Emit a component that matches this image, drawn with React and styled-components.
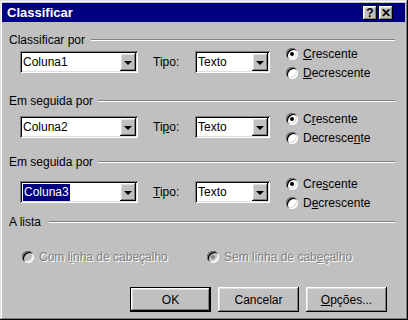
import React from 'react';
import styled, { createGlobalStyle } from 'styled-components';

const GlobalStyle = createGlobalStyle`
  html, body { margin: 0; padding: 0; background: #c0c0c0; }
  body { font-family: "Liberation Sans", Arial, sans-serif; font-size: 12px; color: #000; }
`;

const raised = `
  box-shadow: inset -1px -1px #000, inset 1px 1px #fff, inset -2px -2px #808080, inset 2px 2px #dfdfdf;
`;
const sunken = `
  box-shadow: inset 1px 1px #808080, inset -1px -1px #fff, inset 2px 2px #000, inset -2px -2px #dfdfdf;
`;

const Window = styled.div`
  box-sizing: border-box;
  width: 408px;
  height: 320px;
  padding: 3px 3px 3px 2px;
  background: #c0c0c0;
  box-shadow: inset -1px -1px #000, inset 1px 1px #dfdfdf, inset -2px -2px #808080, inset 2px 2px #fff;
  display: flex;
  flex-direction: column;
`;

const TitleBar = styled.div`
  height: 19px;
  background: #000080;
  display: flex;
  align-items: center;
  padding: 0 12px 0 5px;
  color: #fff;
`;

const Title = styled.span`
  flex: 1;
  font-weight: bold;
  font-size: 13px;
`;

const TitleButton = styled.div`
  box-sizing: border-box;
  width: 14px;
  height: 14px;
  margin-left: ${p => p.$gap || 0}px;
  background: #c0c0c0;
  ${raised}
  color: #000;
  font: bold 12px "Liberation Sans", Arial, sans-serif;
  display: flex;
  align-items: center;
  justify-content: center;
  line-height: 1;
`;

const Header = styled.div`
  display: flex;
  align-items: center;
  height: 14px;
  margin-top: ${p => p.$top}px;
  padding: 0 10px 0 7px;
`;

const HeaderLine = styled.div`
  flex: 1;
  margin-left: ${p => p.$gap || 6}px;
  border-top: 1px solid #808080;
  border-bottom: 1px solid #fff;
`;

const Row = styled.div`
  display: flex;
  align-items: center;
  height: 22px;
  margin-top: ${p => p.$top}px;
  padding-left: 18px;
`;

const Combo = styled.div`
  box-sizing: border-box;
  width: ${p => p.$width}px;
  height: 22px;
  padding: 2px;
  background: #fff;
  ${sunken}
  display: flex;
  align-items: center;
`;

const ComboText = styled.div`
  flex: 1;
  padding-left: 1px;
  white-space: nowrap;
`;

const Selected = styled.span`
  background: #000080;
  color: #fff;
  padding: 1px 1px 2px 1px;
`;

const DropButton = styled.div`
  box-sizing: border-box;
  width: 16px;
  height: 18px;
  background: #c0c0c0;
  ${raised}
  display: flex;
  align-items: center;
  justify-content: center;

  &::after {
    content: '';
    border-left: 4px solid transparent;
    border-right: 4px solid transparent;
    border-top: 4px solid #000;
    margin-top: 1px;
  }
`;

const Label = styled.div`
  width: 42px;
  margin-left: 15px;
`;

const Key = styled.span`
  text-decoration: underline;
  text-underline-offset: 1px;
`;

const RadioGroup = styled.div`
  display: flex;
  flex-direction: column;
  margin-left: 16px;
  margin-top: 2px;
`;

const RadioItem = styled.div`
  display: flex;
  align-items: center;
  height: 19px;
  width: ${p => (p.$width ? `${p.$width}px` : 'auto')};
  color: ${p => (p.$disabled ? '#808080' : '#000')};
  text-shadow: ${p => (p.$disabled ? '1px 1px #fff' : 'none')};
`;

const RadioCircle = styled.span`
  position: relative;
  box-sizing: border-box;
  width: 12px;
  height: 12px;
  margin-right: 5px;
  border-radius: 50%;
  background: ${p => (p.$disabled ? '#c0c0c0' : '#fff')};
  ${sunken}
  flex: none;

  &::after {
    content: '';
    display: ${p => (p.$checked ? 'block' : 'none')};
    position: absolute;
    left: 4px;
    top: 4px;
    width: 4px;
    height: 4px;
    border-radius: 50%;
    background: ${p => (p.$disabled ? '#808080' : '#000')};
  }
`;

const OptionRow = styled.div`
  display: flex;
  align-items: center;
  margin-top: 18px;
  padding-left: 20px;
`;

const ButtonRow = styled.div`
  display: flex;
  gap: 7px;
  margin-top: 21px;
  padding-left: 128px;
`;

const Button = styled.div`
  box-sizing: border-box;
  width: 81px;
  height: 25px;
  background: #c0c0c0;
  ${raised}
  border: ${p => (p.$default ? '1px solid #000' : 'none')};
  display: flex;
  align-items: center;
  justify-content: center;
`;

const Radio = ({ checked, disabled, width, children }) => (
  <RadioItem $disabled={disabled} $width={width}>
    <RadioCircle $checked={checked} $disabled={disabled} />
    <span>{children}</span>
  </RadioItem>
);

const SortRow = ({ top, column, selected, tipo, asc, desc }) => (
  <Row $top={top}>
    <Combo $width={118}>
      <ComboText>{selected ? <Selected>{column}</Selected> : column}</ComboText>
      <DropButton />
    </Combo>
    <Label>{tipo}</Label>
    <Combo $width={75}>
      <ComboText>Texto</ComboText>
      <DropButton />
    </Combo>
    <RadioGroup>
      <Radio checked>{asc}</Radio>
      <Radio>{desc}</Radio>
    </RadioGroup>
  </Row>
);

export default function App() {
  return (
    <>
      <GlobalStyle />
      <Window>
        <TitleBar>
          <Title>Classificar</Title>
          <TitleButton>?</TitleButton>
          <TitleButton $gap={2}>✕</TitleButton>
        </TitleBar>

        <Header $top={11}>Classificar por<HeaderLine /></Header>
        <SortRow
          top={4}
          column="Coluna1"
          tipo="Tipo:"
          asc={<><Key>C</Key>rescente</>}
          desc={<><Key>D</Key>ecrescente</>}
        />

        <Header $top={21}>Em seguida por<HeaderLine $gap={5} /></Header>
        <SortRow
          top={8}
          column="Coluna2"
          tipo={<>Ti<Key>p</Key>o:</>}
          asc={<>C<Key>r</Key>escente</>}
          desc={<>Decresce<Key>n</Key>te</>}
        />

        <Header $top={17}>Em seguida por<HeaderLine $gap={5} /></Header>
        <SortRow
          top={12}
          column="Coluna3"
          selected
          tipo={<><Key>T</Key>ipo:</>}
          asc={<>Cre<Key>s</Key>cente</>}
          desc={<>D<Key>e</Key>crescente</>}
        />

        <Header $top={12}>A lista<HeaderLine $gap={8} /></Header>
        <OptionRow>
          <Radio disabled width={185}>Com l<Key>i</Key>nha de cabeçalho</Radio>
          <Radio disabled checked>Sem linha de cab<Key>e</Key>çalho</Radio>
        </OptionRow>

        <ButtonRow>
          <Button $default>OK</Button>
          <Button>Cancelar</Button>
          <Button><span><Key>O</Key>pções...</span></Button>
        </ButtonRow>
      </Window>
    </>
  );
}
